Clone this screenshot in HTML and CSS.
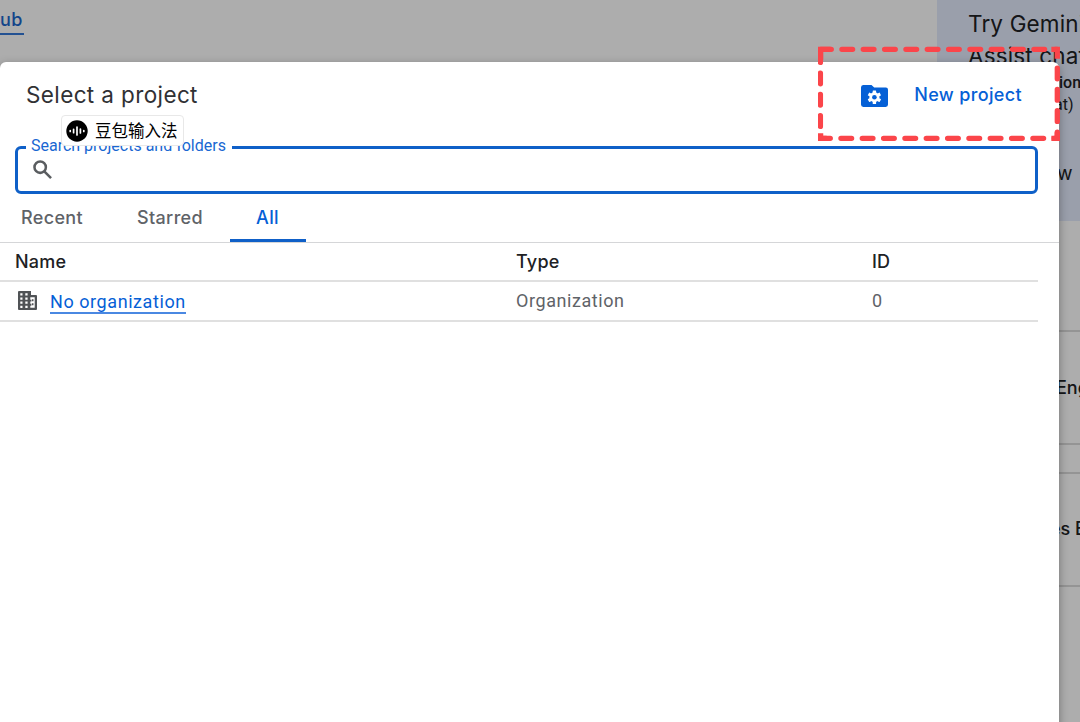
FILE: index.html
```html
<!DOCTYPE html>
<html lang="en">
<head>
  <meta charset="UTF-8">
  <meta name="viewport" content="width=device-width, initial-scale=1.0">
  <title>Select a project</title>
  <link rel="stylesheet" href="styles.css">
</head>
<body>
  <div class="page">
    <main class="page-main"><a class="hub-link">ub</a></main>
    <aside class="page-side">
      <div class="gemini-card">
        <div class="gemini-title">Try Gemini</div>
        <div class="gemini-title">Assist chat</div>
        <div class="gemini-strong">ion</div>
        <div class="gemini-small">at)</div>
        <div class="gemini-more">w</div>
      </div>
      <div class="side-gap"></div>
      <div class="side-row">Eng</div>
      <div class="side-space"></div>
      <div class="side-row side-row-es">es E</div>
    </aside>
  </div>
  <div class="scrim"></div>

  <div class="dialog">
    <header>
      <h1>Select a project</h1>
      <button class="new-project">
        <svg width="27" height="22" viewBox="0 0 27 22">
          <path fill="#0560d6" d="M2.5 0h8l2.7 2.5h11.3A2.3 2.3 0 0 1 27 4.8v14.7a2.4 2.4 0 0 1-2.5 2.4h-22A2.4 2.4 0 0 1 0 19.5V2.4A2.4 2.4 0 0 1 2.5 0z"/>
          <g fill="#fff">
            <circle cx="13.4" cy="12.3" r="5"/>
            <rect x="11.7" y="5.5" width="3.4" height="13.6" rx=".5"/>
            <rect x="11.7" y="5.5" width="3.4" height="13.6" rx=".5" transform="rotate(60 13.4 12.3)"/>
            <rect x="11.7" y="5.5" width="3.4" height="13.6" rx=".5" transform="rotate(120 13.4 12.3)"/>
          </g>
          <circle cx="13.4" cy="12.3" r="2.3" fill="#0560d6"/>
        </svg>
        <span>New project</span>
      </button>
    </header>

    <fieldset class="search">
      <legend><span>Search projects and folders</span></legend>
      <svg width="19" height="19" viewBox="0 0 18 18" fill="none" stroke="#5a5d60" stroke-width="2.4">
        <circle cx="6.8" cy="6.8" r="5.4"/>
        <path d="M10.7 10.7l6.4 6.4"/>
      </svg>
    </fieldset>

    <nav class="tabs">
      <a class="tab tab-recent">Recent</a>
      <a class="tab tab-starred">Starred</a>
      <a class="tab tab-all active">All</a>
    </nav>

    <table>
      <thead>
        <tr><th class="col-name">Name</th><th class="col-type">Type</th><th>ID</th></tr>
      </thead>
      <tbody>
        <tr>
          <td>
            <div class="org">
              <svg width="19" height="19" viewBox="0 0 19 19">
                <path fill="#505356" fill-rule="evenodd" d="M1 0h12v4h5a1 1 0 0 1 1 1v13a1 1 0 0 1-1 1H1a1 1 0 0 1-1-1V1a1 1 0 0 1 1-1zM2.300 2.300h2.200v2.100H2.300zM2.300 6.500h2.200v2.200H2.300zM2.300 10.600h2.200v2.200H2.300zM2.300 14.800h2.200v2.100H2.300zM7.300 2.300h2.300v2.100H7.300zM7.300 6.500h2.300v2.200H7.300zM7.300 10.600h2.300v2.200H7.300zM7.300 14.800h2.300v2.100H7.300zM12.300 6.200h4.400v10.600h-4.400v-2.100h1.100v-1.900h-1.100v-2.300h1.100V8.700h-1.100z"/>
                <path fill="#505356" d="M13.900 8.200h1.600v2h-1.600zM13.900 12.200h1.600v2h-1.600z"/>
              </svg>
              <a>No organization</a>
            </div>
          </td>
          <td>Organization</td>
          <td>0</td>
        </tr>
      </tbody>
    </table>
  </div>

  <div class="ime">
    <svg width="22" height="22" viewBox="0 0 22 22">
      <circle cx="11" cy="11" r="10.7" fill="#000"/>
      <path stroke="#fff" stroke-width="1.7" stroke-linecap="round" d="M4.2 10.5v1M7.6 9.3v3.4M11 7v8M14.4 9v4M17.8 10.5v1"/>
    </svg>
    <span>豆包输入法</span>
  </div>

  <svg class="highlight" width="242" height="96" viewBox="0 0 242 96" fill="none" stroke="#fb454a" stroke-width="5.3" stroke-linecap="round">
    <g stroke-dasharray="10.7 10.63">
      <path d="M2.6 3.3H239"/>
      <path d="M2.4 5.7V92"/>
      <path d="M1.6 92.3H239"/>
      <path d="M239.3 22.1V92"/>
    </g>
    <path stroke-linecap="square" d="M2.6 11V3.3H10M2.6 90V92.3H6M239.3 10V3.3H236M239.3 89V92.3H236"/>
  </svg>
</body>
</html>
```
FILE: styles.css
```css
* {
  box-sizing: border-box;
}
body {
  margin: 0;
  height: 722px;
  overflow: hidden;
  position: relative;
  background: #fff;
  font-family: Roboto, "Liberation Sans", sans-serif;
}

/* page under the dialog */
.page {
  display: flex;
  height: 722px;
}
.page-main {
  width: 937px;
}
.hub-link {
  display: inline-block;
  height: 35px;
  padding: 9px 1px 0 0;
  font: 500 18px/22px Inter, sans-serif;
  letter-spacing: .4px;
  color: #1b66cc;
  border-bottom: 2px solid #3478d8;
}
.page-side {
  width: 143px;
  overflow: hidden;
  white-space: nowrap;
  color: #202124;
}
.gemini-card {
  height: 221px;
  padding: 8px 0 0 31px;
  background: #e4eafc;
}
.gemini-title {
  font: 400 22.5px/32px Inter, sans-serif;
  letter-spacing: .15px;
}
.gemini-strong {
  padding-left: 91px;
  font: 500 16px/22px Roboto, sans-serif;
}
.gemini-small {
  padding-left: 86px;
  font: 400 16px/21px Roboto, sans-serif;
}
.gemini-more {
  padding: 47px 0 0 89px;
  font: 400 19px/24px Inter, sans-serif;
}
.side-gap {
  height: 109px;
}
.side-space {
  height: 27px;
}
.side-row {
  height: 115px;
  padding-left: 119px;
  border-top: 2px solid #dadada;
  border-bottom: 2px solid #dadada;
  font: 500 18px/111px Inter, sans-serif;
}
.side-row-es {
  padding-left: 113px;
  line-height: 109px;
}
.scrim {
  position: absolute;
  inset: 0;
  background: rgba(0, 0, 0, .32);
}

/* dialog */
.dialog {
  position: absolute;
  top: 62px;
  left: 0;
  width: 1059px;
  height: 670px;
  background: #fff;
  border-radius: 6px;
  box-shadow: 0 3px 10px rgba(0, 0, 0, .35);
}
header {
  display: flex;
  justify-content: space-between;
  align-items: center;
  height: 65px;
  padding: 1px 37px 0 26px;
}
h1 {
  margin: 0;
  font: 400 22.5px/30px Inter, sans-serif;
  letter-spacing: .38px;
  color: #303134;
}
.new-project {
  display: flex;
  align-items: center;
  gap: 26px;
  padding: 0;
  border: 0;
  background: none;
  font: 500 18px/24px Inter, sans-serif;
  letter-spacing: .36px;
  color: #0560d6;
}
.new-project svg {
  margin-top: 1px;
}
.search {
  width: 1023px;
  height: 57px;
  margin: 10px 0 0 15px;
  padding: 0 0 0 15px;
  border: 3px solid #0f60c8;
  border-radius: 6px;
}
.search legend {
  height: 21px;
  margin-left: -7px;
  padding: 0 6px 0 5px;
  font-size: 16px;
  line-height: 17px;
  color: #1967d2;
}
.search svg {
  display: block;
  margin-top: 2px;
}
.tabs {
  display: flex;
  height: 49px;
  border-bottom: 1px solid #d5d6d8;
}
.tab {
  height: 48px;
  font: 500 18px/47px Inter, sans-serif;
  letter-spacing: .35px;
  color: #5f6368;
}
.tab-recent {
  width: 116px;
  padding-left: 21px;
}
.tab-starred {
  width: 114px;
  padding-left: 21px;
}
.tab-all {
  width: 76px;
  padding-right: 1px;
  text-align: center;
}
.active {
  color: #0560d6;
  border-bottom: 3px solid #0f60c8;
}

table {
  width: 1038px;
  border-collapse: separate;
  border-spacing: 0;
  table-layout: fixed;
}
th, td {
  padding: 0;
  text-align: left;
  border-bottom: 2px solid #e0e0e0;
}
th {
  height: 39px;
  font: 500 18px/36px Inter, sans-serif;
  letter-spacing: .2px;
  color: #202124;
}
td {
  height: 40px;
  font-size: 18px;
  line-height: 36px;
  letter-spacing: .57px;
  color: #5f6368;
}
.col-name {
  width: 516px;
  padding-left: 15px;
}
.col-type {
  width: 356px;
}
.org {
  display: flex;
  align-items: center;
  padding-left: 18px;
}
.org svg {
  margin-bottom: 2px;
}
.org a {
  margin: 3px 0 0 13px;
  line-height: 21px;
  color: #0560d6;
  border-bottom: 2px solid #4a88e2;
}

/* input method bubble */
.ime {
  position: absolute;
  top: 115px;
  left: 61px;
  display: flex;
  align-items: center;
  gap: 7px;
  width: 123px;
  height: 31px;
  padding-left: 4px;
  background: #fff;
  border: 1px solid #e8e8e8;
  border-radius: 4px;
  font: 400 16.5px/29px "Noto Sans CJK SC", sans-serif;
  color: #000;
  white-space: nowrap;
}
.highlight {
  position: absolute;
  top: 46px;
  left: 818px;
}
```
